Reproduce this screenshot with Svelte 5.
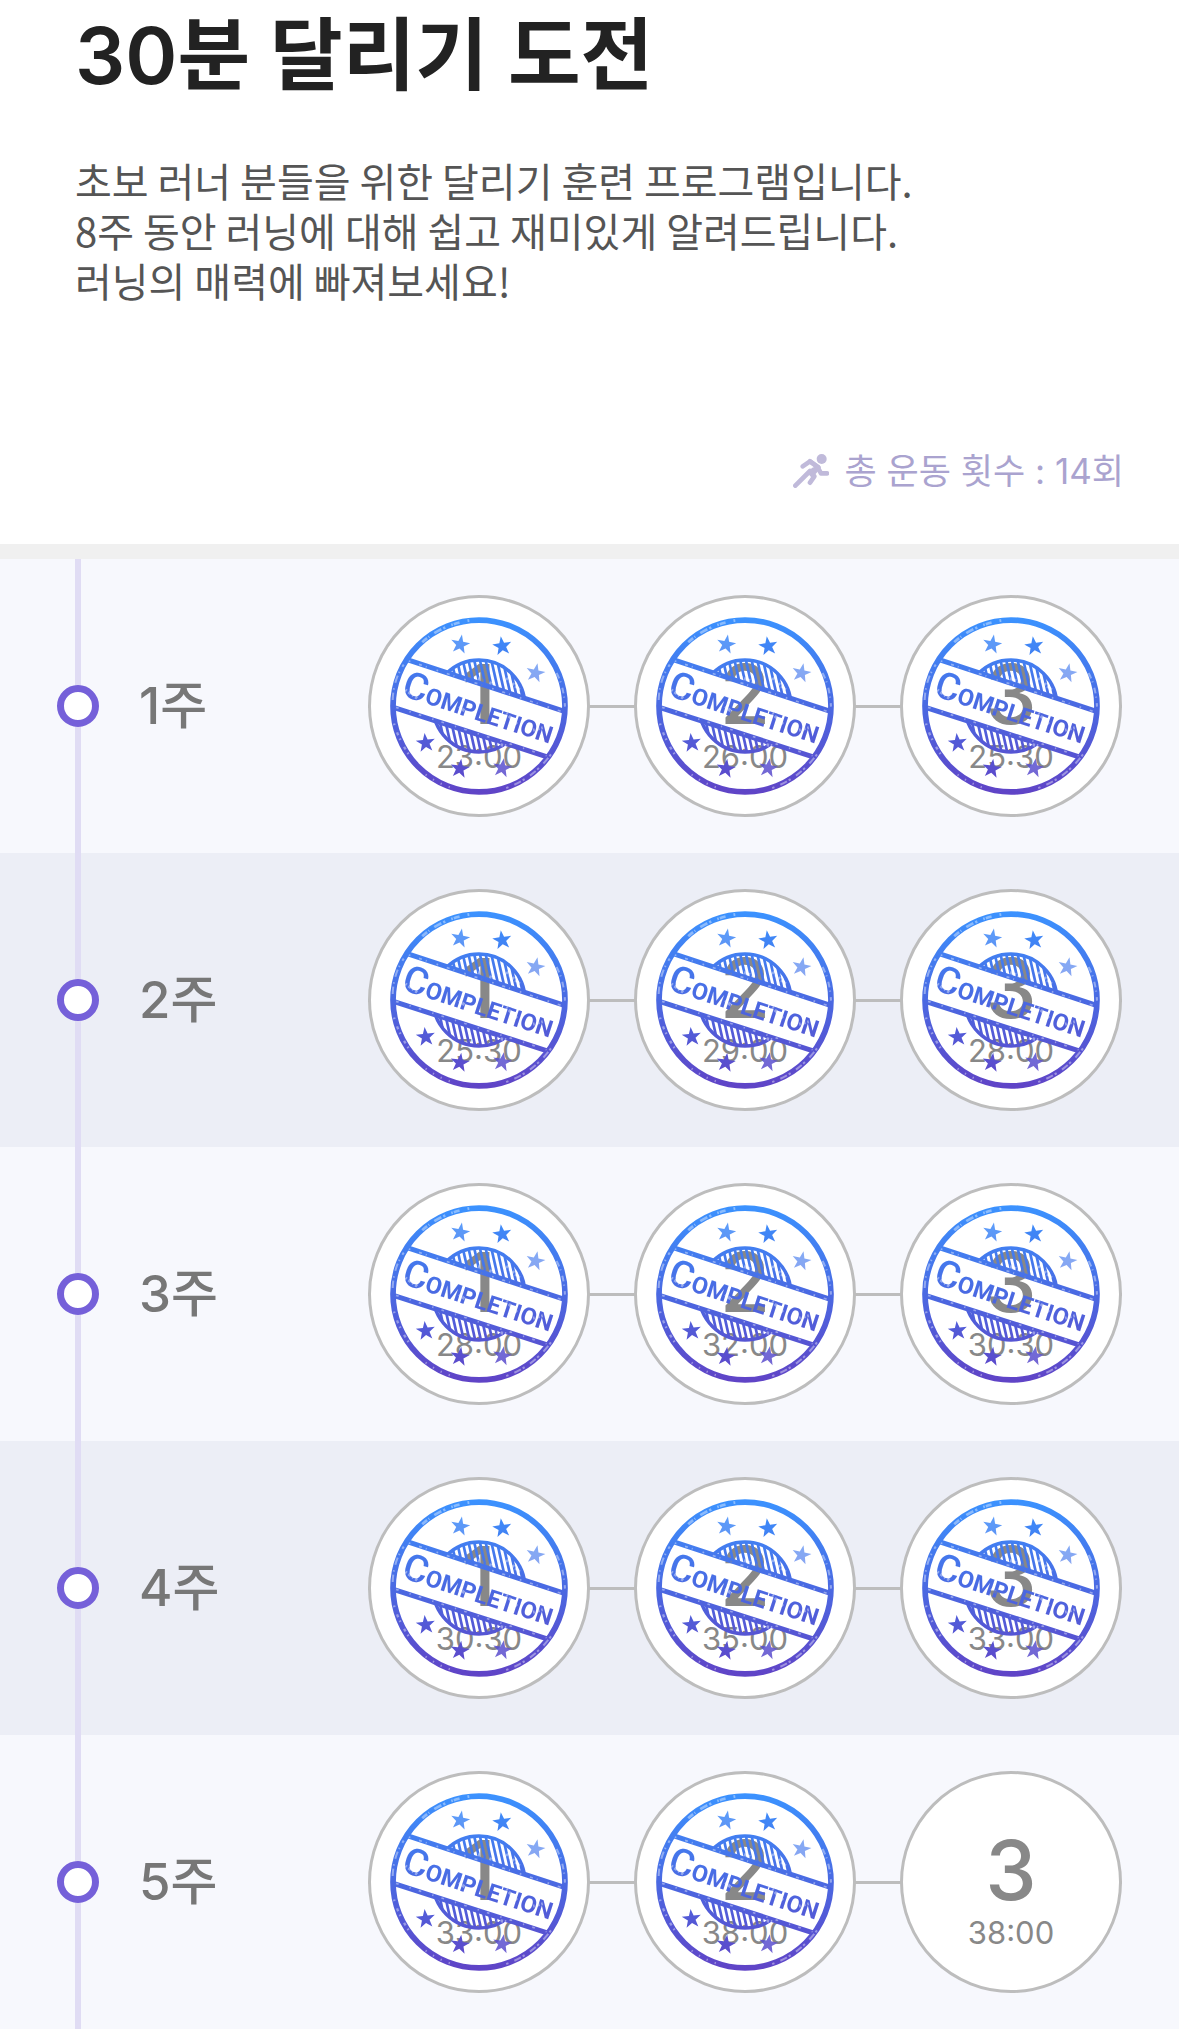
<script lang="ts">
  const weeks = [
    { label: '1주', runs: [{ time: '23:00', done: true }, { time: '26:00', done: true }, { time: '25:30', done: true }] },
    { label: '2주', runs: [{ time: '25:30', done: true }, { time: '29:00', done: true }, { time: '28:00', done: true }] },
    { label: '3주', runs: [{ time: '28:00', done: true }, { time: '32:00', done: true }, { time: '30:30', done: true }] },
    { label: '4주', runs: [{ time: '30:30', done: true }, { time: '35:00', done: true }, { time: '33:00', done: true }] },
    { label: '5주', runs: [{ time: '33:00', done: true }, { time: '38:00', done: true }, { time: '38:00', done: false }] },
  ];

  // centre, rotation and ink strength of each star on the stamp
  const stars = [
    [303, 165, 10, 0.85], [428, 170, -8, 1], [527, 250, 12, 0.65],
    [200, 458, -6, 1], [302, 535, 8, 1], [428, 533, 10, 0.85],
  ];

  const starPoints = Array.from({ length: 10 }, (_, i) => {
    const r = i % 2 ? 12 : 30;
    const a = (i * Math.PI) / 5 - Math.PI / 2;
    return `${(r * Math.cos(a)).toFixed(1)},${(r * Math.sin(a)).toFixed(1)}`;
  }).join(' ');

  const hatch = Array.from({ length: 19 }, (_, i) => 188 + i * 17);
</script>

<svg class="defs" width="0" height="0" aria-hidden="true">
  <defs>
    <linearGradient id="ink" x1="0" y1="0" x2="0" y2="1">
      <stop offset="0" stop-color="#3b93ff" />
      <stop offset="0.5" stop-color="#4a69e2" />
      <stop offset="1" stop-color="#6043c6" />
    </linearGradient>
    <clipPath id="cap-top"><path d="M94 83H624V368L94 193Z" /></clipPath>
    <clipPath id="cap-bottom"><path d="M94 348L624 519V613H94Z" /></clipPath>
    <clipPath id="core"><circle cx="359" cy="348" r="138" /></clipPath>
    <mask id="print" maskUnits="userSpaceOnUse" x="94" y="83" width="530" height="530">
      <g fill="none" stroke="#fff">
        <circle cx="359" cy="348" r="256" stroke-width="17" />
        <path d="M145 210L616 365M104 352L564 500" stroke-width="15" />
        <g stroke-width="10" clip-path="url(#cap-top)">
          <circle cx="359" cy="348" r="137" />
          <g clip-path="url(#core)">
            {#each hatch as x}
              <path d="M{x} 195L{x + 35} 350" stroke-width="8" />
            {/each}
          </g>
        </g>
        <g stroke-width="10" clip-path="url(#cap-bottom)">
          <circle cx="359" cy="348" r="137" />
          <g clip-path="url(#core)">
            {#each hatch as x}
              <path d="M{x} 380L{x + 27} 500" stroke-width="8" />
            {/each}
          </g>
        </g>
      </g>
      {#each stars as [x, y, turn, strength]}
        <polygon points={starPoints} fill="#fff" fill-opacity={strength} transform="translate({x} {y}) rotate({turn})" />
      {/each}
      <text class="stamp-text" transform="translate(125 316) rotate(18)"><tspan class="stamp-initial">C</tspan>OMPLETION</text>
      <g fill="none" stroke="#000" stroke-opacity="0.4">
        <path d="M190 158Q245 108 330 93" stroke-width="8" stroke-dasharray="19 5 3 18 24 6 7" />
        <path d="M102 330Q104 270 135 225" stroke-width="6" stroke-dasharray="22 9 4 17" />
        <path d="M590 250Q612 290 615 350" stroke-width="6" stroke-dasharray="18 10 3 16" />
        <path d="M106 400Q122 455 156 500" stroke-width="7" stroke-dasharray="5 23 9 11" />
        <path d="M440 592Q520 565 575 490" stroke-width="6" stroke-dasharray="7 19 22 6" />
        <path d="M200 552Q240 582 290 595" stroke-width="6" stroke-dasharray="4 22" />
        <path d="M150 214L610 366" stroke-width="5" stroke-dasharray="5 27 9 12 3 31" />
        <path d="M112 352L560 496" stroke-width="5" stroke-dasharray="8 34 4 25" />
        <path d="M140 300L175 325M300 350L345 385M440 370L475 405M520 420L560 410" stroke-width="9" stroke-dasharray="5 6 9 5" />
        <path d="M345 262L400 282M440 265L480 300M400 460L440 466" stroke-width="9" stroke-dasharray="7 5" />
      </g>
    </mask>
    <symbol id="stamp" viewBox="94 83 530 530">
      <rect x="94" y="83" width="530" height="530" fill="url(#ink)" mask="url(#print)" />
    </symbol>
  </defs>
</svg>

<main class="program">
  <header class="intro">
    <h1>30분 달리기 도전</h1>
    <p class="intro__text">
      초보 러너 분들을 위한 달리기 훈련 프로그램입니다.<br />
      8주 동안 러닝에 대해 쉽고 재미있게 알려드립니다.<br />
      러닝의 매력에 빠져보세요!
    </p>
    <p class="total">
      <svg class="total__icon" viewBox="0 0 108 102" aria-hidden="true">
        <circle cx="86" cy="15" r="15" fill="currentColor" />
        <g fill="none" stroke="currentColor" stroke-width="14" stroke-linecap="round" stroke-linejoin="round">
          <path d="M29 37L51 22L76 40L64 54" />
          <path d="M51 22L76 40L60 48" />
          <path d="M74 40L84 58H102" />
          <path d="M7 95L51 51L64 67L51 86" />
          <path d="M51 55L62 67" />
        </g>
      </svg>
      <span>총 운동 횟수 : 14회</span>
    </p>
  </header>

  <ol class="weeks">
    {#each weeks as week}
      <li class="week">
        <span class="week__rail"><span class="week__dot"></span></span>
        <h2>{week.label}</h2>
        <div class="runs">
          {#each week.runs as run, i}
            <button class="run" type="button">
              <span class="run__number">{i + 1}</span>
              <span class="run__time">{run.time}</span>
              {#if run.done}
                <svg class="run__stamp" aria-hidden="true"><use href="#stamp" /></svg>
              {/if}
            </button>
          {/each}
        </div>
      </li>
    {/each}
  </ol>
</main>

<style>
  :global(body) {
    margin: 0;
    background: #fff;
  }

  .defs {
    position: absolute;
  }

  .program {
    font-family: Inter, 'Noto Sans CJK KR', sans-serif;
  }

  .intro {
    padding: 0 55px 48px 75px;
    border-bottom: 15px solid #f0f0f0;
  }

  h1 {
    margin: 0;
    color: #222;
    font-size: 79px;
    font-weight: 600;
    line-height: 110px;
  }

  .intro__text {
    margin: 45px 0 0;
    color: #555;
    font-family: 'Noto Sans CJK KR', sans-serif;
    font-size: 40px;
    line-height: 50px;
  }

  .total {
    display: flex;
    align-items: center;
    justify-content: flex-end;
    gap: 15px;
    margin: 141px 0 0;
    color: #aaa3cf;
    font-size: 35px;
    line-height: 50px;
  }

  .total__icon {
    width: 36px;
    height: 34px;
    color: #c0bada;
  }

  .weeks {
    margin: 0;
    padding: 0;
    list-style: none;
  }

  .week {
    display: flex;
    align-items: center;
    height: 294px;
    padding: 0 57px;
    background: #f7f8fd;
  }

  .week:nth-child(even) {
    background: #eceef6;
  }

  .week__rail {
    display: flex;
    align-items: center;
    justify-content: center;
    align-self: stretch;
    width: 42px;
    background: linear-gradient(#e0dcf4, #e0dcf4) center / 6px 100% no-repeat;
  }

  .week__dot {
    box-sizing: border-box;
    width: 42px;
    height: 42px;
    border: 7px solid #7560d9;
    border-radius: 50%;
    background: #fff;
  }

  h2 {
    flex: 1;
    margin: 0 0 0 40px;
    color: #777;
    font-size: 51px;
    font-weight: 500;
    line-height: 60px;
  }

  .runs {
    display: flex;
    gap: 44px;
    background: linear-gradient(#bdbdbd, #bdbdbd) center / 100% 3px no-repeat;
  }

  .run {
    position: relative;
    display: flex;
    flex-direction: column;
    align-items: center;
    box-sizing: border-box;
    width: 222px;
    height: 222px;
    padding: 55px 0 0;
    border: 3px solid #bdbdbd;
    border-radius: 50%;
    background: #fff;
    color: #888;
    font-family: inherit;
  }

  .run__number {
    font-size: 82px;
    font-weight: 500;
    line-height: 84px;
  }

  .run__time {
    font-size: 31px;
    line-height: 40px;
  }

  .run__stamp {
    position: absolute;
    inset: 19px;
    width: 178px;
    height: 178px;
  }

  .stamp-text {
    fill: #fff;
    font-family: Roboto, sans-serif;
    font-size: 70px;
    font-weight: 700;
  }

  .stamp-initial {
    font-size: 112px;
    font-weight: 500;
  }
</style>
